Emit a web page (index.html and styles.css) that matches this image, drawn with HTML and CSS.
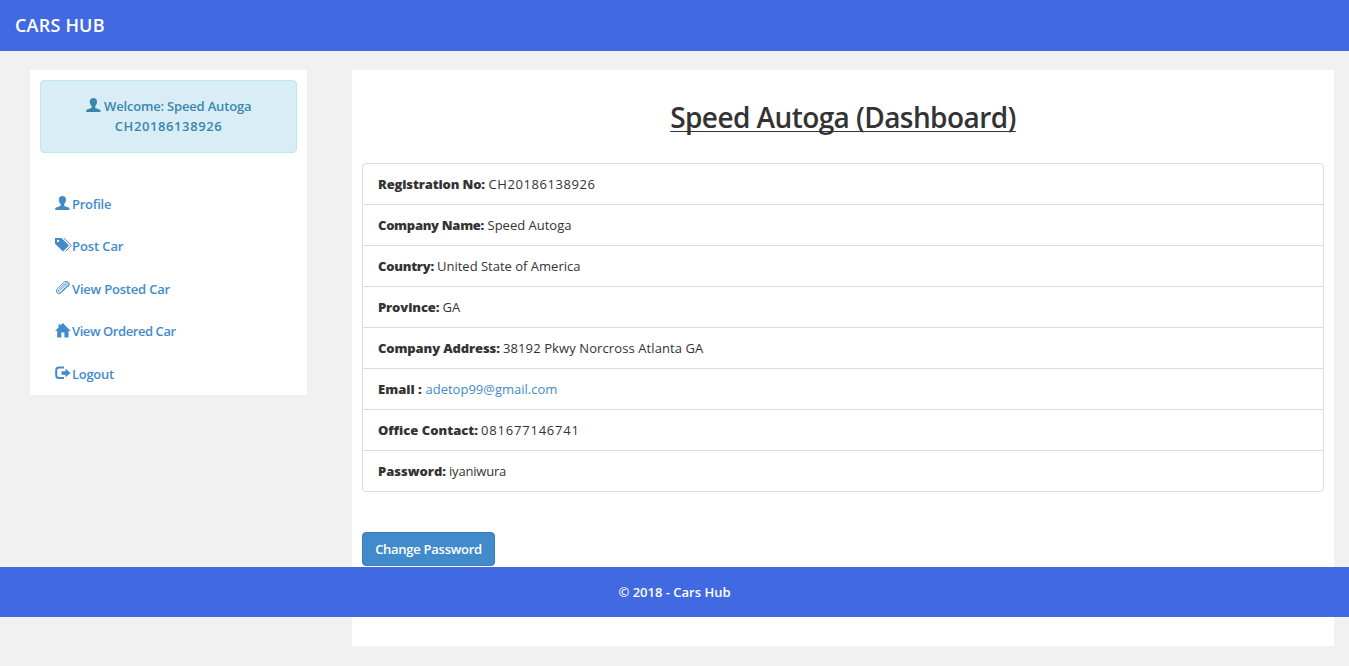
FILE: index.html
```html
<!DOCTYPE html>
<html lang="en">
<head>
<meta charset="utf-8">
<title>Cars Hub</title>
<link rel="stylesheet" href="styles.css">
</head>
<body>
<svg class="symbols" width="0" height="0">
  <symbol id="user" viewBox="0 0 15 14"><path d="M7.400 0C5.200 0 3.800 1.400 3.800 3.500c0 2.100.8 3.500 1.800 4.500v1.700C5.200 10.500.5 11 .2 12.500V14h14.300v-1.500C14.200 11 9.600 10.500 9.200 9.700V8c1-1 1.800-2.400 1.800-4.500C11 1.400 9.600 0 7.400 0z"/></symbol>
</svg>
<nav class="navbar"><a class="brand" href="#">CARS HUB</a></nav>
<div class="page">
  <aside class="sidebar">
    <div class="alert"><svg class="icon user" viewBox="0 0 15 14"><use href="#user"/></svg> <span class="welcome">Welcome: Speed Autoga</span><br><span class="code">CH20186138926</span></div>
    <ul class="menu">
      <li><a href="#"><svg class="icon" viewBox="0 0 17 15"><use href="#user" width="15" height="14"/></svg><span class="m-profile">Profile</span></a></li>
      <li><a href="#"><svg class="icon" viewBox="0 0 17 15"><path fill-rule="evenodd" d="M0 0h6.500L14 7.500l-6 6L0 5.800zM3 1.700a1.200 1.200 0 1 0 0 2.400 1.200 1.200 0 0 0 0-2.400z"/><path d="M9 .4 16.300 7.500l-5.800 6" fill="none" stroke="currentColor"/></svg><span class="m-post">Post Car</span></a></li>
      <li><a href="#"><svg class="icon" viewBox="0 0 17 15"><path d="M5 10l5.500-5.700c1.200-1.100 2.300 0 1.300 1.200l-5.600 5.700c-2 1.700-4-.2-2.300-2.200L9.800 3c2.500-2.200 5.200.2 3 2.700l-6 6.200c-3.500 3.300-7.300-.5-4.200-3.900L8.500 2c3.400-3.200 7.600.4 4.800 4.200" transform="translate(0 -.5)" fill="none" stroke="currentColor" stroke-width=".95"/></svg><span class="m-posted">View Posted Car</span></a></li>
      <li><a href="#"><svg class="icon" viewBox="0 0 17 15"><path d="M7.800 0 15.700 8h-2.200v6.500H9.400v-5H6.300v5H2.200V8H0L3.500 4.400V1.300h1.800v1.300z"/></svg><span class="m-ordered">View Ordered Car</span></a></li>
      <li><a href="#"><svg class="icon" viewBox="0 0 17 15"><path d="M9 1.500H4Q1.200 1.500 1.200 4.300v5q0 2.700 2.800 2.700h5" fill="none" stroke="currentColor" stroke-width="2"/><path d="M6.500 5.200h4v-2.700L15.500 7l-5 4.300V8.700h-4z"/></svg><span class="m-logout">Logout</span></a></li>
    </ul>
  </aside>
  <main class="main">
    <h1><span>Speed Autoga (Dashboard)</span></h1>
    <ul class="details">
      <li><b class="l1">Registration No:</b><span class="v1">CH20186138926</span></li>
      <li><b class="l2">Company Name:</b><span class="v2">Speed Autoga</span></li>
      <li><b class="l3">Country:</b><span class="v3">United State of America</span></li>
      <li><b class="l4">Province:</b><span class="v4">GA</span></li>
      <li><b class="l5">Company Address:</b><span class="v5">38192 Pkwy Norcross Atlanta GA</span></li>
      <li><b class="l6">Email :</b><a class="v6" href="#">adetop99@gmail.com</a></li>
      <li><b class="l7">Office Contact:</b><span class="v7">081677146741</span></li>
      <li><b class="l8">Password:</b><span class="v8">iyaniwura</span></li>
    </ul>
    <button class="btn">Change Password</button>
  </main>
</div>
<footer class="footer"><span>© 2018 - Cars Hub</span></footer>
</body>
</html>
```
FILE: styles.css
```css
* { box-sizing: border-box; }
body { margin: 0; height: 666px; overflow: hidden; background: #f1f1f1; color: #333; font: 500 13px/20px "Open Sans", "Noto Sans", sans-serif; }
a { color: #428bca; text-decoration: none; }
ul { list-style: none; margin: 0; padding: 0; }
.symbols { position: absolute; }
.navbar { height: 51px; padding: 15px; background: #4169e1; }
.brand { color: #fff; font-size: 18px; font-weight: 600; line-height: 20px; letter-spacing: .2px; }
.page { display: flex; align-items: flex-start; gap: 45px; padding: 19px 15px 0 30px; }
.sidebar { width: 277px; height: 325px; padding: 10px; background: #fff; }
.alert { height: 73px; padding: 15px; border: 1px solid #bce8f1; border-radius: 4px; background: #d9edf7; color: #3a87ad; text-align: center; font-weight: 600; }
.icon { width: 17px; height: 15px; flex: none; fill: currentColor; }
.icon.user { width: 15px; height: 14px; vertical-align: -1px; }
.welcome { letter-spacing: -.18px; }
.code { letter-spacing: .6px; }
.menu { margin-top: 29.9px; }
.menu li { height: 42.5px; padding: 11px 15px; }
.menu a { display: flex; font-weight: 600; white-space: nowrap; }
.menu .icon { margin-top: 2px; }
.m-profile { letter-spacing: -.25px; }
.m-post { letter-spacing: -.1px; }
.m-posted { letter-spacing: -.2px; }
.m-ordered { letter-spacing: -.43px; }
.m-logout { letter-spacing: -.3px; }
.main { flex: 1; height: 576px; padding: 10px; background: #fff; }
h1 { margin: 20px 0 28px; font-size: 28px; font-weight: 600; line-height: 35px; letter-spacing: -.58px; text-align: center; text-decoration: underline; text-decoration-thickness: 1px; text-underline-offset: 3px; text-decoration-skip-ink: none; }
.details { border: 1px solid #ddd; border-radius: 4px; }
.details li { display: flex; gap: 3px; height: 41px; padding: 10px 15px; border-bottom: 1px solid #ddd; white-space: nowrap; }
.details li:last-child { height: 40px; border-bottom: 0; }
.details b { font-weight: 800; }
.l1 { width: 107.5px; letter-spacing: -.15px; }
.l2 { width: 106.5px; letter-spacing: -.3px; }
.l3 { width: 56px; letter-spacing: -.25px; }
.l4 { width: 61.5px; letter-spacing: -.1px; }
.l5 { width: 122px; letter-spacing: -.12px; }
.l6 { width: 44.5px; }
.l7 { width: 100px; }
.l8 { width: 68px; }
.v1 { letter-spacing: .58px; }
.v5 { letter-spacing: .1px; }
.v7 { letter-spacing: .8px; }
.v8 { letter-spacing: -.2px; }
.btn { display: block; width: 133px; height: 34px; margin-top: 40px; padding: 0; border: 1px solid #357ebd; border-radius: 4px; background: #428bca; color: #fff; font: 600 13px/20px "Open Sans", sans-serif; letter-spacing: -.27px; white-space: nowrap; }
.footer { position: fixed; top: 567px; left: 0; right: 0; height: 50px; padding: 15px; background: #4169e1; color: #fff; text-align: center; font-weight: 600; }
```
